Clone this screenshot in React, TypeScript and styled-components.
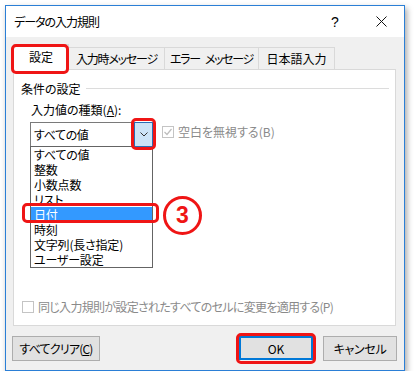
import React from "react"
import styled, { createGlobalStyle } from "styled-components"

const RED = "#ef1515"

const GlobalStyle = createGlobalStyle`
  html, body {
    margin: 0;
    padding: 0;
    background: #fff;
  }
  body {
    font-family: "Noto Sans CJK JP", "Noto Sans", sans-serif;
    font-size: 12px;
    color: #000;
    font-feature-settings: "palt";
  }
  * {
    box-sizing: border-box;
  }
`

const Window = styled.div`
  margin: 5px 0 0 5px;
  width: 400px;
  height: 366px;
  border: 1px solid #2b7fd6;
  box-shadow: 2px 3px 6px rgba(0, 0, 0, 0.35);
  background: #f0f0f0;
  display: flex;
  flex-direction: column;
`

const TitleBar = styled.div`
  flex-shrink: 0;
  height: 31px;
  background: #fff;
  display: flex;
  align-items: center;
  padding-left: 8px;
`

const Title = styled.div`
  flex: 1;
  line-height: 16px;
  letter-spacing: -1px;
`

const TitleButton = styled.div`
  width: 46px;
  height: 31px;
  display: flex;
  align-items: center;
  justify-content: center;
  font-family: "Liberation Sans", sans-serif;
  font-size: 14px;
`

const Body = styled.div`
  flex: 1;
  display: flex;
  flex-direction: column;
  padding: 10px 8px 0 7px;
`

const TabStrip = styled.div`
  height: 22px;
  display: flex;
  align-items: flex-end;
`

const Tab = styled.div<{ $active?: boolean; $w: number; $tight: number }>`
  position: relative;
  z-index: ${(p) => (p.$active ? 2 : 1)};
  width: ${(p) => p.$w}px;
  height: ${(p) => (p.$active ? 26 : 22)}px;
  margin-bottom: ${(p) => (p.$active ? -1 : 0)}px;
  margin-left: -1px;
  &:first-child {
    margin-left: 0;
  }
  border: 1px solid #d9d9d9;
  border-bottom: none;
  background: ${(p) => (p.$active ? "#fff" : "#f0f0f0")};
  display: flex;
  align-items: center;
  justify-content: center;
  padding-bottom: ${(p) => (p.$active ? 2 : 0)}px;
  white-space: nowrap;
  letter-spacing: ${(p) => p.$tight}px;
`

const WordGap = styled.span`
  display: inline-block;
  width: 5px;
`

const RedFrame = styled.div<{ $t: number; $r: number; $b: number; $l: number }>`
  position: absolute;
  top: ${(p) => p.$t}px;
  right: ${(p) => p.$r}px;
  bottom: ${(p) => p.$b}px;
  left: ${(p) => p.$l}px;
  border: 3px solid ${RED};
  border-radius: 5px;
  pointer-events: none;
  z-index: 5;
`

const Panel = styled.div`
  position: relative;
  z-index: 0;
  height: 257px;
  border: 1px solid #d9d9d9;
  background: #fff;
  display: flex;
  flex-direction: column;
`

const GroupHeader = styled.div`
  margin: 10px 6px 0 7px;
  height: 16px;
  display: flex;
  align-items: center;
`

const GroupLine = styled.div`
  flex: 1;
  margin-left: 5px;
  border-top: 1px solid #dcdcdc;
`

const FieldLabel = styled.div`
  margin: 6px 0 0 17px;
  line-height: 16px;
`

const ComboRow = styled.div`
  margin: 4px 0 0 16px;
  display: flex;
  align-items: flex-start;
`

const Combo = styled.div`
  width: 123px;
  height: 25px;
  border: 1px solid #7a7a7a;
  background: #fff;
  display: flex;
  align-items: center;
  padding-left: 3px;
`

const ComboText = styled.div`
  flex: 1;
  line-height: 16px;
  letter-spacing: -0.4px;
`

const DropButton = styled.div`
  position: relative;
  width: 19px;
  height: 25px;
  margin: -1px -1px -1px 0;
  border: 1px solid #2a6db5;
  background: #cce4f7;
  display: flex;
  align-items: center;
  justify-content: center;
`

const CheckOption = styled.label<{ $indent: number; $top: number; $tight: number }>`
  margin: ${(p) => p.$top}px 0 0 ${(p) => p.$indent}px;
  display: flex;
  align-items: center;
  line-height: 16px;
  color: #8a8a8a;
  letter-spacing: ${(p) => p.$tight}px;
  white-space: nowrap;
`

const CheckBox = styled.span`
  width: 12px;
  height: 12px;
  flex-shrink: 0;
  border: 1px solid #c4c4c4;
  background: #fff;
  margin-right: 4px;
  display: flex;
  align-items: center;
  justify-content: center;
`

const ListBox = styled.div`
  margin: -1px 0 0 16px;
  width: 123px;
  height: 122px;
  border: 1px solid #646464;
  background: #fff;
`

const ListItem = styled.div<{ $selected?: boolean }>`
  position: relative;
  height: 15px;
  line-height: 15px;
  padding-left: 3px;
  white-space: nowrap;
  letter-spacing: -0.2px;
  background: ${(p) => (p.$selected ? "#3399ff" : "transparent")};
  color: ${(p) => (p.$selected ? "#fff" : "#000")};
`

const StepBadge = styled.div`
  position: absolute;
  left: calc(100% + 11px);
  top: -11px;
  width: 39px;
  height: 39px;
  border: 3px solid ${RED};
  border-radius: 50%;
  background: #fff;
  color: ${RED};
  display: flex;
  align-items: center;
  justify-content: center;
  font-family: "Liberation Sans", sans-serif;
  font-weight: bold;
  font-size: 23px;
  letter-spacing: 0;
  z-index: 5;
`

const ButtonRow = styled.div`
  margin: 10px -1px 0 -1px;
  display: flex;
  align-items: flex-start;
`

const Button = styled.div<{ $w: number; $default?: boolean; $tight?: number }>`
  position: relative;
  width: ${(p) => p.$w}px;
  height: ${(p) => (p.$default ? 24 : 25)}px;
  border: 1px solid ${(p) => (p.$default ? "#0078d7" : "#adadad")};
  box-shadow: ${(p) => (p.$default ? "inset 0 0 0 1px #0078d7" : "none")};
  background: #e1e1e1;
  display: flex;
  align-items: center;
  justify-content: center;
  white-space: nowrap;
  letter-spacing: ${(p) => p.$tight ?? 0}px;
`

const Spacer = styled.div`
  flex: 1;
`

const Chevron = () => (
  <svg width="8" height="5" viewBox="0 0 8 5">
    <path d="M0.5 0.5 L4 4 L7.5 0.5" fill="none" stroke="#333" strokeWidth="1" />
  </svg>
)

const Check = () => (
  <svg width="10" height="10" viewBox="0 0 10 10">
    <path d="M1.5 5 L4 7.5 L8.5 2" fill="none" stroke="#bdbdbd" strokeWidth="1.2" />
  </svg>
)

const CloseIcon = () => (
  <svg width="11" height="11" viewBox="0 0 11 11">
    <path d="M0.5 0.5 L10.5 10.5 M10.5 0.5 L0.5 10.5" stroke="#111" strokeWidth="1" />
  </svg>
)

const tabs = [
  { label: <>設定</>, w: 56, tight: 0 },
  { label: <>入力時メッセージ</>, w: 97, tight: -1.2 },
  {
    label: (
      <>
        エラー<WordGap />メッセージ
      </>
    ),
    w: 95,
    tight: -1.3,
  },
  { label: <>日本語入力</>, w: 77, tight: 0 },
]

const types = ["すべての値", "整数", "小数点数", "リスト", "日付", "時刻", "文字列(長さ指定)", "ユーザー設定"]

export default function App() {
  return (
    <>
      <GlobalStyle />
      <Window>
        <TitleBar>
          <Title>データの入力規則</Title>
          <TitleButton>?</TitleButton>
          <TitleButton>
            <CloseIcon />
          </TitleButton>
        </TitleBar>
        <Body>
          <TabStrip>
            {tabs.map((t, i) => (
              <Tab key={i} $w={t.w} $tight={t.tight} $active={i === 0}>
                {t.label}
                {i === 0 && <RedFrame $t={-1} $r={-1} $b={-4} $l={-3} />}
              </Tab>
            ))}
          </TabStrip>
          <Panel>
            <GroupHeader>
              条件の設定
              <GroupLine />
            </GroupHeader>
            <FieldLabel>
              入力値の種類(<u>A</u>):
            </FieldLabel>
            <ComboRow>
              <Combo>
                <ComboText>すべての値</ComboText>
                <DropButton>
                  <Chevron />
                  <RedFrame $t={-5} $r={-4} $b={-4} $l={-4} />
                </DropButton>
              </Combo>
              <CheckOption $indent={9} $top={2} $tight={0}>
                <CheckBox>
                  <Check />
                </CheckBox>
                空白を無視する(B)
              </CheckOption>
            </ComboRow>
            <ListBox>
              {types.map((t) => (
                <ListItem key={t} $selected={t === "日付"}>
                  {t}
                  {t === "日付" && (
                    <>
                      <RedFrame $t={-4} $r={-7} $b={-1} $l={-9} />
                      <StepBadge>3</StepBadge>
                    </>
                  )}
                </ListItem>
              ))}
            </ListBox>
            <CheckOption $indent={8} $top={31} $tight={-0.7}>
              <CheckBox />
              同じ入力規則が設定されたすべてのセルに変更を適用する(P)
            </CheckOption>
          </Panel>
          <ButtonRow>
            <Button $w={88} $tight={-0.8}>
              すべてクリア(<u>C</u>)
            </Button>
            <Spacer />
            <Button $w={74} $default>
              OK
              <RedFrame $t={-4} $r={-4} $b={-5} $l={-4} />
            </Button>
            <Button $w={74} $tight={-0.3} style={{ marginLeft: 10 }}>
              キャンセル
            </Button>
          </ButtonRow>
        </Body>
      </Window>
    </>
  )
}
